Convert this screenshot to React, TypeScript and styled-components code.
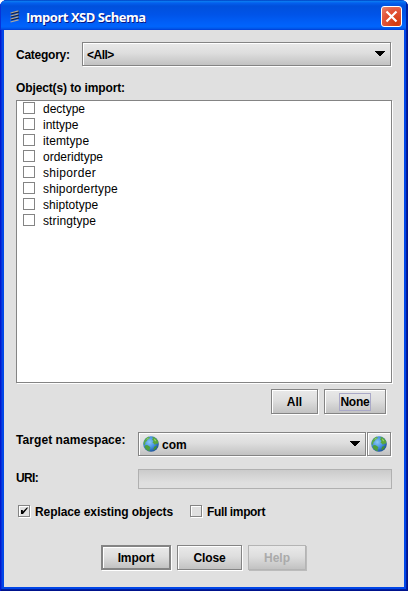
import React from "react";
import styled, { createGlobalStyle, css } from "styled-components";

const GlobalStyle = createGlobalStyle`
  * { box-sizing: border-box; }
  body { margin: 0; background: #fff; }
`;

const raised = css`
  border: 1px solid #848484;
  box-shadow: inset 1px 1px 0 #fff, 1px 1px 0 #fff;
  background: linear-gradient(#e9e9e9, #dedede 45%, #c2c2c2);
`;

const Frame = styled.div`
  width: 408px;
  height: 591px;
  display: flex;
  flex-direction: column;
  padding: 0 4px 4px;
  border-radius: 7px 7px 0 0;
  overflow: hidden;
  background: #0046e8;
  box-shadow: inset 1px 0 0 #0019cf, inset -1px -1px 0 #00138c, inset -2px -2px 0 #001ea0, inset 2px 0 0 #0831d9;
  font: bold 12px/16px "Liberation Sans", Arial, sans-serif;
  color: #000;
`;

const TitleBar = styled.header`
  flex: none;
  height: 30px;
  margin: 0 -4px;
  padding: 1px 6px 0 8px;
  display: flex;
  align-items: center;
  background: linear-gradient(#0040c0 0, #0a78f0 5%, #0360ee 10%, #0050dc 20%, #0054e9 50%, #005ff8 75%, #0064fc 88%, #005bed 94%, #003dd7 100%);
  box-shadow: inset 1px 0 0 #0831d9, inset -2px 0 0 #001ea0;
`;

const Title = styled.h1`
  margin: 2px 0 0 4px;
  flex: 1;
  font: bold 13px/18px "Open Sans", sans-serif;
  letter-spacing: -0.48px;
  color: #fff;
  text-shadow: 1px 1px 0 #0a1883;
`;

const CloseBox = styled.button`
  width: 21px;
  height: 21px;
  padding: 0;
  margin-top: 2px;
  border: 1px solid #fff;
  border-radius: 3px;
  background: radial-gradient(circle at 75% 85%, #d43a0c, #e2553a 60%, #e88570);
  display: grid;
  place-items: center;
`;

const Body = styled.main`
  flex: 1;
  background: #e0e0e0;
  padding: 12px 12px 0;
  display: flex;
  flex-direction: column;
`;

const Row = styled.div<{ $top?: number; $h: number }>`
  display: flex;
  flex: none;
  align-items: stretch;
  height: ${(p) => p.$h}px;
  margin-top: ${(p) => p.$top ?? 0}px;
`;

const ButtonRow = styled(Row)<{ $indent: number }>`
  gap: 6px;
  padding-left: ${(p) => p.$indent}px;
`;

const Text = styled.span<{ $ls?: number }>`
  white-space: nowrap;
  letter-spacing: ${(p) => p.$ls ?? 0}px;
`;

const Label = styled(Text)<{ $w?: number; $pad?: number }>`
  flex: none;
  width: ${(p) => (p.$w ? `${p.$w}px` : "auto")};
  padding-top: ${(p) => p.$pad ?? 0}px;
`;

const Combo = styled.div<{ $w: number }>`
  ${raised}
  width: ${(p) => p.$w}px;
  flex: none;
  display: flex;
  align-items: center;
  gap: 3px;
  padding: 0 5px 0 4px;
  ${Text} { margin-top: 1px; }
  svg:last-child { margin-left: auto; margin-top: -2px; }
`;

const List = styled.ul`
  flex: none;
  margin: 4px 0 0;
  padding: 0 0 0 6px;
  width: 376px;
  height: 283px;
  list-style: none;
  background: #fff;
  border: 1px solid #848484;
  box-shadow: 1px 1px 0 #fff;
  font-weight: normal;
`;

const Item = styled.li`
  height: 16px;
  display: flex;
  gap: 8px;
`;

const Check = styled.span<{ $list?: boolean }>`
  flex: none;
  width: 12px;
  height: 12px;
  margin-top: ${(p) => (p.$list ? 1 : 0)}px;
  border: 1px solid #848484;
  box-shadow: inset 1px 1px 0 #fff, 1px 1px 0 #fff;
  display: grid;
  place-items: center;
`;

const Option = styled.label<{ $w: number }>`
  display: flex;
  gap: 5px;
  flex: none;
  width: ${(p) => p.$w}px;
  line-height: 14px;
`;

const Options = styled(Row)`
  padding-left: 2px;
`;

const Button = styled.button<{ $w: number; $default?: boolean; $ls?: number }>`
  ${raised}
  width: ${(p) => p.$w}px;
  flex: none;
  padding: 1px 0 0;
  font: inherit;
  letter-spacing: ${(p) => p.$ls ?? 0}px;
  color: #000;
  ${(p) => p.$default && css`border-width: 2px;`}
  &:disabled {
    color: #aaa;
    border-color: #b4b4b4;
    box-shadow: 1px 1px 0 #bbb;
  }
`;

const FocusText = styled(Text)`
  outline: 1px solid #aaa9c8;
  display: inline-block;
  height: 16px;
`;

const GlobeButton = styled.button`
  ${raised}
  width: 24px;
  margin-left: 1px;
  padding: 0;
  display: grid;
  place-items: center;
`;

const Field = styled.div`
  width: 254px;
  border: 1px solid #b0b0b0;
  background: linear-gradient(#cbcbcb, #dfdfdf 70%);
`;

const Arrow = () => (
  <svg width="10" height="5" viewBox="0 0 10 5" shapeRendering="crispEdges">
    <path d="M0 0H10V1H9V2H8V3H7V4H6V5H4V4H3V3H2V2H1V1H0Z" />
  </svg>
);

const Globe = () => (
  <svg width="16" height="16" viewBox="0 0 16 16">
    <defs>
      <radialGradient id="sea" cx=".4" cy=".38" r=".65">
        <stop offset="0" stopColor="#8cc8f6" />
        <stop offset=".55" stopColor="#4390e0" />
        <stop offset="1" stopColor="#1c5096" />
      </radialGradient>
    </defs>
    <circle cx="8" cy="8" r="7.8" fill="url(#sea)" />
    <path d="M.6 8.5C.2 5 2.5 1.8 5.5.8L7 1.5 6 3 4.5 3.5 4 5 2.5 6 2.2 8 1.5 9Z" fill="#5cab48" />
    <path d="M9 .7C12 1 14.5 3.2 15.4 6L14.5 8 13 7.5 12 9 10.8 7.5 9.5 6.5 10.5 5 9 3.5 10 2.5Z" fill="#5aa83a" />
    <path d="M2 9.5 4 9 6 10 7.5 11.5 6.5 13 6.8 15.2C4.5 14.8 2.5 13 1.6 11Z" fill="#4fa03b" />
    <path d="M11.5 10.5 14 10 13 12.8 10.8 14.3 10.5 12.5Z" fill="#43912f" />
    <path d="M3 4 5 1.8 6 2 4.5 3.2Z M11 2.5 12.8 4 13 5.5 11.5 4.5Z" fill="#a2d678" />
  </svg>
);

const AppIcon = () => (
  <svg width="14" height="16" viewBox="0 0 14 16" fill="none">
    <g stroke="#111f45" strokeWidth="2.2">
      <path d="M3 5.5 11 3.5M3 8.5 11 6.5M3 11.5 11 9.5" />
    </g>
    <path d="M2.5 5 10.5 2.8M2.5 8 10.5 5.8M2.5 11 10.5 8.8M2.5 14 10.5 11.8" stroke="#aaa79f" strokeWidth="1.2" />
  </svg>
);

const items: [string, number][] = [
  ["dectype", 0], ["inttype", 0], ["itemtype", 0.1], ["orderidtype", 0],
  ["shiporder", 0.33], ["shipordertype", 0.17], ["shiptotype", 0.05], ["stringtype", 0.1],
];

export default function App() {
  return (
    <>
      <GlobalStyle />
      <Frame>
        <TitleBar>
          <AppIcon />
          <Title>Import XSD Schema</Title>
          <CloseBox aria-label="Close window">
            <svg width="13" height="13" viewBox="0 0 13 13">
              <path d="M1.5 1.5 11.5 11.5M11.5 1.5 1.5 11.5" stroke="#fff" strokeWidth="2.2" />
            </svg>
          </CloseBox>
        </TitleBar>
        <Body>
          <Row $h={24}>
            <Label $w={66} $pad={5} $ls={-0.25}>Category:</Label>
            <Combo $w={309}><Text $ls={-0.5}>&lt;All&gt;</Text><Arrow /></Combo>
          </Row>
          <Row $h={16} $top={14}><Label $ls={-0.12}>Object(s) to import:</Label></Row>
          <List>
            {items.map(([name, ls]) => (
              <Item key={name}><Check $list /><Text $ls={ls}>{name}</Text></Item>
            ))}
          </List>
          <ButtonRow $h={25} $top={6} $indent={255}>
            <Button $w={47}>All</Button>
            <Button $w={62}><FocusText $ls={-0.2}>None</FocusText></Button>
          </ButtonRow>
          <Row $h={24} $top={18}>
            <Label $w={122} $ls={0.07}>Target namespace:</Label>
            <Combo $w={228}><Globe /><Text>com</Text><Arrow /></Combo>
            <GlobeButton aria-label="Browse namespaces"><Globe /></GlobeButton>
          </Row>
          <Row $h={20} $top={13}>
            <Label $w={122} $pad={1} $ls={-0.65}>URI:</Label>
            <Field />
          </Row>
          <Options $h={16} $top={16}>
            <Option $w={172}>
              <Check>
                <svg width="8" height="8" viewBox="0 0 8 8"><path d="M1 3V7H3L7.5 1.5V0L2.8 4.5V3Z" /></svg>
              </Check>
              <Text $ls={-0.08}>Replace existing objects</Text>
            </Option>
            <Option $w={80}>
              <Check />
              <Text $ls={-0.36}>Full import</Text>
            </Option>
          </Options>
          <ButtonRow $h={25} $top={24} $indent={85}>
            <Button $w={70} $default $ls={-0.1}>Import</Button>
            <Button $w={65} $ls={-0.15}>Close</Button>
            <Button $w={58} disabled>Help</Button>
          </ButtonRow>
        </Body>
      </Frame>
    </>
  );
}
